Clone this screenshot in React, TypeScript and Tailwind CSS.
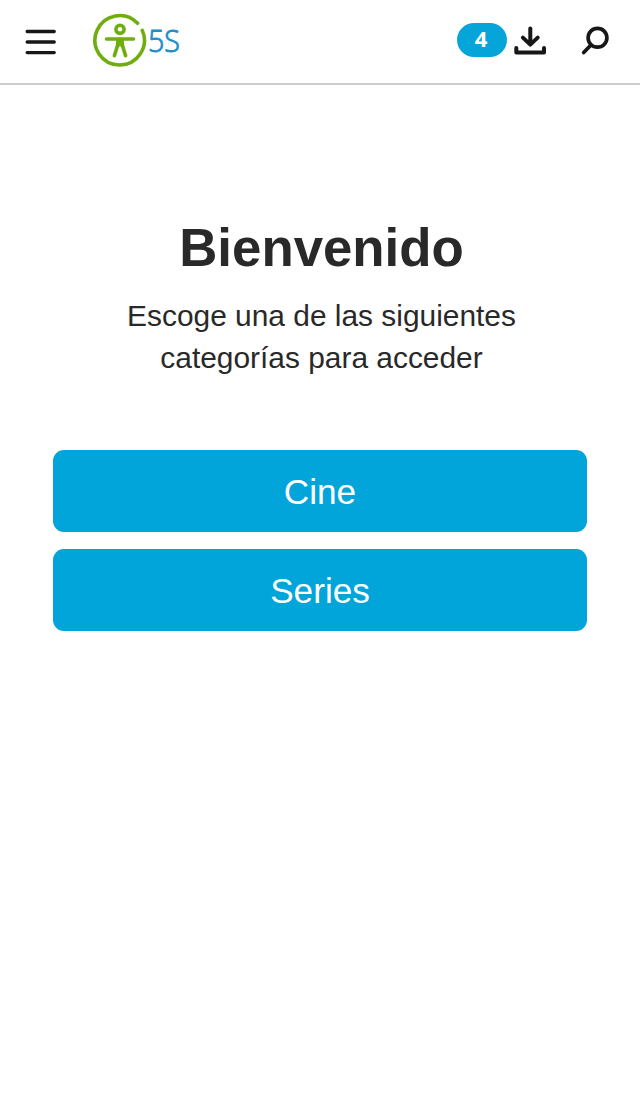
const categories = ["Cine", "Series"];

function MenuIcon() {
  return (
    <svg width="32" height="28" viewBox="0 0 32 28" fill="none" stroke="currentColor" strokeWidth="3.4" strokeLinecap="round">
      <path d="M2.2 3.5h27M2.2 14h27M2.2 24.6h27" />
    </svg>
  );
}

function Logo() {
  return (
    <svg width="90" height="56" viewBox="0 0 90 56" fill="none" stroke="#6fae0e" strokeWidth="3.6" strokeLinecap="round">
      <path d="M44.7 10.3A24.7 24.7 0 1 0 49.4 17.4" transform="translate(.9 1)" />
      <circle cx="28" cy="17.3" r="4.1" />
      <path d="M14.5 27h27" />
      <path d="M26.2 27.5l-.8 6.5-3 9.6M29.8 27.5l.8 6.5 3 9.6" />
      <path d="M25.5 28h5l.8 6.5h-6.6z" fill="#6fae0e" stroke="none" />
      <text
        x="56"
        y="39.9"
        fontSize="30.5"
        fontWeight="300"
        textLength="32"
        lengthAdjust="spacingAndGlyphs"
        fill="#1a8fcb"
        stroke="#1a8fcb"
        strokeWidth="0.9"
        className="font-['Open_Sans',sans-serif]"
      >
        5S
      </text>
    </svg>
  );
}

function DownloadIcon() {
  return (
    <svg width="34" height="32" viewBox="0 0 34 32" fill="none" stroke="currentColor" strokeWidth="4" strokeLinecap="round" strokeLinejoin="round">
      <path d="M17.3 4.4v15.4M9.9 13.6l7.4 7 7.4-7" />
      <path d="M3.3 23.9v4.5h27.7v-4.5" />
    </svg>
  );
}

function SearchIcon() {
  return (
    <svg width="30" height="32" viewBox="0 0 30 32" fill="none" stroke="currentColor" strokeWidth="3.7" strokeLinecap="round">
      <circle cx="17.5" cy="13.8" r="9.4" />
      <path d="M10.7 21.2l-7 7.4" />
    </svg>
  );
}

function Header() {
  return (
    <header className="flex h-[85px] items-start border-b-2 border-[#cccccc] text-[#171717]">
      <button aria-label="Menú" className="mt-7 ml-[25px]">
        <MenuIcon />
      </button>
      <a href="#" aria-label="Inicio" className="mt-3 ml-[35px]">
        <Logo />
      </a>
      <div className="ml-auto flex items-start">
        <span className="mt-[23px] flex h-[34px] w-[50px] items-center justify-center rounded-full bg-[#06a5d9] pr-0.5 pb-[3px] font-['Open_Sans',sans-serif] text-[22px] font-bold text-white">
          4
        </span>
        <button aria-label="Descargas" className="mt-6 ml-1.5">
          <DownloadIcon />
        </button>
        <button aria-label="Buscar" className="mt-6 mr-[30px] ml-[33px]">
          <SearchIcon />
        </button>
      </div>
    </header>
  );
}

export default function App() {
  return (
    <div className="min-h-screen bg-white font-['Liberation_Sans',Arial,sans-serif] text-[#292929]">
      <Header />
      <main className="px-[53px] pt-[133px]">
        <div className="pl-[3px] text-center">
          <h1 className="text-[52.8px] leading-[60px] font-bold">Bienvenido</h1>
          <p className="mt-[17px] text-[29.9px] leading-[42px]">
            Escoge una de las siguientes
            <br />
            categorías para acceder
          </p>
        </div>
        <div className="mt-[71px] flex flex-col gap-[17px]">
          {categories.map((name) => (
            <button key={name} className="h-[82px] rounded-[11px] bg-[#01a5da] pt-[3px] text-[35.2px] text-white">
              {name}
            </button>
          ))}
        </div>
      </main>
    </div>
  );
}
